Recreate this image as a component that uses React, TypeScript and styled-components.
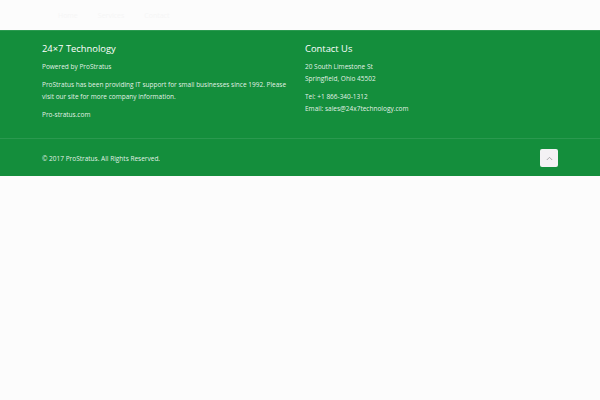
import React from "react";
import styled, { createGlobalStyle } from "styled-components";

const GlobalStyle = createGlobalStyle`
  html, body {
    margin: 0;
    padding: 0;
    background: #fcfcfc;
    font-family: "Open Sans", "Noto Sans", sans-serif;
  }
`;

const TopBar = styled.div`
  height: 30px;
  display: flex;
  align-items: center;
  gap: 20px;
  padding-left: 58px;
  box-sizing: border-box;
  background: #fcfcfc;
`;

const TopLink = styled.span`
  font-size: 7px;
  color: #f6f6f6;
`;

const Footer = styled.footer`
  background: #148e3c;
  border-top: 1px solid #2b9a50;
  color: rgba(255, 255, 255, 0.9);
`;

const Widgets = styled.div`
  display: grid;
  grid-template-columns: 263px 1fr;
  padding: 11px 42px 17px;
  border-bottom: 1px solid #2a994f;
`;

const Column = styled.div`
  display: flex;
  flex-direction: column;
`;

const Heading = styled.h3`
  margin: 0 0 5px;
  font-size: 9.4px;
  line-height: 14px;
  font-weight: 400;
  color: #ffffff;
`;

const Para = styled.p`
  margin: 0 0 6px;
  font-size: 6.5px;
  line-height: 12px;
  &:last-child {
    margin-bottom: 0;
  }
`;

const Bottom = styled.div`
  height: 37px;
  display: flex;
  align-items: center;
  justify-content: space-between;
  padding: 1px 42px 0;
  box-sizing: border-box;
`;

const Copy = styled.span`
  font-size: 6.5px;
`;

const TopButton = styled.button`
  width: 18px;
  height: 18px;
  border: none;
  border-radius: 2px;
  background: #f4f2f4;
  display: flex;
  align-items: center;
  justify-content: center;
  padding: 0;
  cursor: pointer;
`;

export default function App() {
  return (
    <>
      <GlobalStyle />
      <TopBar>
        <TopLink>Home</TopLink>
        <TopLink>Services</TopLink>
        <TopLink>Contact</TopLink>
      </TopBar>
      <Footer>
        <Widgets>
          <Column>
            <Heading>24×7 Technology</Heading>
            <Para>Powered by ProStratus</Para>
            <Para>
              ProStratus has been providing IT support for small businesses since 1992. Please
              <br />
              visit our site for more company information.
            </Para>
            <Para>Pro-stratus.com</Para>
          </Column>
          <Column>
            <Heading>Contact Us</Heading>
            <Para>
              20 South Limestone St
              <br />
              Springfield, Ohio 45502
            </Para>
            <Para>
              Tel: +1 866-340-1312
              <br />
              Email: sales@24x7technology.com
            </Para>
          </Column>
        </Widgets>
        <Bottom>
          <Copy>© 2017 ProStratus. All Rights Reserved.</Copy>
          <TopButton aria-label="Back to top">
            <svg width="7" height="5" viewBox="0 0 7 5">
              <path d="M0.8 4 L3.5 1.3 L6.2 4" fill="none" stroke="#9a9a9a" strokeWidth="0.8" />
            </svg>
          </TopButton>
        </Bottom>
      </Footer>
    </>
  );
}
